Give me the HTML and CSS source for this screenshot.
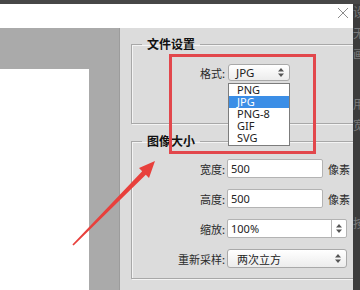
FILE: index.html
```html
<!DOCTYPE html>
<html lang="zh-CN">
<head>
    <meta charset="UTF-8">
    <meta name="viewport" content="width=device-width, initial-scale=1.0">
    <title>存储为 Web 所用格式</title>
    <link rel="stylesheet" href="styles.css">
</head>
<body>
    <div class="topbar"></div>
    <div class="window">
        <div class="main">
            <div class="header">
                <svg class="close" width="12" height="12" viewBox="0 0 12 12">
                    <path d="M1 1 L11 11 M11 1 L1 11" stroke="#8c8c8c" stroke-width="1" fill="none"/>
                </svg>
            </div>
            <div class="content">
                <div class="canvas">
                    <div class="doc"></div>
                </div>
                <div class="panel">
                    <fieldset class="group group-file">
                        <legend>文件设置</legend>
                        <div class="row">
                            <span class="label">格式:</span>
                            <div class="select select-format">
                                <span>JPG</span>
                                <svg class="arrows" width="6" height="9" viewBox="0 0 6 9">
                                    <path d="M0 3.5 L3 0 L6 3.5 Z M0 5.5 L3 9 L6 5.5 Z" fill="#555"/>
                                </svg>
                                <div class="dropdown">
                                    <div class="option">PNG</div>
                                    <div class="option selected">JPG</div>
                                    <div class="option">PNG-8</div>
                                    <div class="option">GIF</div>
                                    <div class="option">SVG</div>
                                </div>
                            </div>
                        </div>
                    </fieldset>
                    <fieldset class="group group-size">
                        <legend>图像大小</legend>
                        <div class="row">
                            <span class="label">宽度:</span>
                            <div class="field">500</div>
                            <span class="unit">像素</span>
                        </div>
                        <div class="row">
                            <span class="label">高度:</span>
                            <div class="field">500</div>
                            <span class="unit">像素</span>
                        </div>
                        <div class="row">
                            <span class="label">缩放:</span>
                            <div class="field field-wide">
                                <span class="field-text">100%</span>
                                <span class="spin">
                                    <svg width="6" height="9" viewBox="0 0 6 9">
                                        <path d="M0 3.5 L3 0 L6 3.5 Z M0 5.5 L3 9 L6 5.5 Z" fill="#555"/>
                                    </svg>
                                </span>
                            </div>
                        </div>
                        <div class="row">
                            <span class="label">重新采样:</span>
                            <div class="select select-wide">
                                <span>两次立方</span>
                                <svg class="arrows" width="6" height="9" viewBox="0 0 6 9">
                                    <path d="M0 3.5 L3 0 L6 3.5 Z M0 5.5 L3 9 L6 5.5 Z" fill="#555"/>
                                </svg>
                            </div>
                        </div>
                    </fieldset>
                </div>
            </div>
        </div>
        <div class="side">
            <div class="side-line first">设</div>
            <div class="side-line">无</div>
            <div class="side-line">画</div>
            <div class="side-line far">用</div>
            <div class="side-line">宽</div>
            <div class="side-line farther">按</div>
        </div>
    </div>

    <div class="highlight-box"></div>
    <svg class="pointer" width="360" height="290" viewBox="0 0 360 290">
        <polygon points="72.4,244.4 142.2,171.3 139,168 155,161 149,178 145.8,174.7 73.6,245.6" fill="#e8403c"/>
    </svg>
</body>
</html>
```

FILE: styles.css
```css
body {
    margin: 0;
    width: 360px;
    height: 290px;
    overflow: hidden;
    position: relative;
    background: #3c3c3c;
    font-family: "Noto Sans CJK SC", sans-serif;
    color: #222;
}
.topbar {
    height: 4px;
    background: #474747;
}
.window {
    display: flex;
    height: 286px;
}
.main {
    width: 353px;
    display: flex;
    flex-direction: column;
}
.header {
    height: 24px;
    background: #fff;
    display: flex;
    justify-content: flex-end;
    align-items: flex-start;
}
.close {
    margin: 3px 4px 0 0;
}
.content {
    flex: 1;
    display: flex;
    min-height: 0;
}
.canvas {
    width: 119px;
    background: #aaaaaa;
    border-right: 1px solid #9c9c9c;
    overflow: hidden;
}
.doc {
    margin-top: 41px;
    width: 89px;
    height: 300px;
    background: #fff;
}
.panel {
    flex: 1;
    background: #dcdcdc;
    overflow: hidden;
    padding-top: 9px;
}
.group {
    margin: 0 -14px 0 11px;
    padding: 0;
    border: 1px solid #a8a8a8;
    box-shadow: inset 1px 1px 0 #f4f4f4, 1px 1px 0 #f4f4f4;
    min-width: 0;
}
.group legend {
    margin-left: 10px;
    padding: 0 5px;
    font-size: 12px;
    font-weight: bold;
    line-height: 14px;
    color: #111;
}
.group-file {
    padding: 13px 0 42px;
}
.group-size {
    margin-top: 10px;
    padding: 11px 0 10px;
    display: flex;
    flex-direction: column;
    gap: 11px;
}
.row {
    display: flex;
    align-items: center;
    height: 19px;
}
.group-file .row {
    height: 17px;
}
.label {
    width: 93px;
    text-align: right;
    font-size: 11px;
    margin-right: 2px;
    color: #2a2a2a;
}
.select {
    position: relative;
    box-sizing: border-box;
    display: flex;
    align-items: center;
    justify-content: space-between;
    background: linear-gradient(#ffffff, #ececec);
    border: 1px solid #a9a9a9;
    border-radius: 3px;
    font-size: 11px;
}
.select-format {
    margin-left: 1px;
    width: 62px;
    height: 17px;
    padding: 0 5px 0 7px;
    font-family: "Noto Sans", sans-serif;
    font-size: 11.5px;
    line-height: 15px;
}
.select-wide {
    width: 120px;
    height: 19px;
    padding: 0 5px 0 9px;
}
.field {
    box-sizing: border-box;
    width: 96px;
    height: 19px;
    background: #fff;
    border: 1px solid #b3b3b3;
    border-radius: 2px;
    padding-left: 3px;
    font-family: "Noto Sans", sans-serif;
    font-size: 11px;
    line-height: 17px;
}
.field-wide {
    width: 120px;
    display: flex;
    justify-content: space-between;
}
.spin {
    width: 14px;
    border-left: 1px solid #b3b3b3;
    display: flex;
    align-items: center;
    justify-content: center;
}
.unit {
    margin-left: 5px;
    font-size: 11px;
    color: #2a2a2a;
}
.dropdown {
    position: absolute;
    top: 18px;
    left: -1px;
    width: 62px;
    box-sizing: border-box;
    background: #fff;
    border: 1px solid #7c7c7c;
    padding: 0 0 1px;
    font-family: "Noto Sans", sans-serif;
    font-size: 11px;
    color: #222;
}
.option {
    height: 12px;
    line-height: 12px;
    padding-left: 8px;
}
.option.selected {
    background: #3b8ee6;
    color: #fff;
}
.side {
    flex: 1;
    overflow: hidden;
    padding-top: 1px;
    font-size: 12px;
    line-height: 14px;
    color: #7a7a7a;
}
.side-line {
    margin-top: 7px;
    white-space: nowrap;
}
.side-line.first {
    margin-top: 0;
}
.side-line.far {
    margin-top: 36px;
}
.side-line.farther {
    margin-top: 84px;
}
.highlight-box {
    position: absolute;
    left: 169px;
    top: 54px;
    width: 147px;
    height: 100px;
    box-sizing: border-box;
    border: 3px solid #e2474c;
}
.pointer {
    position: absolute;
    left: 0;
    top: 0;
    pointer-events: none;
}
```
